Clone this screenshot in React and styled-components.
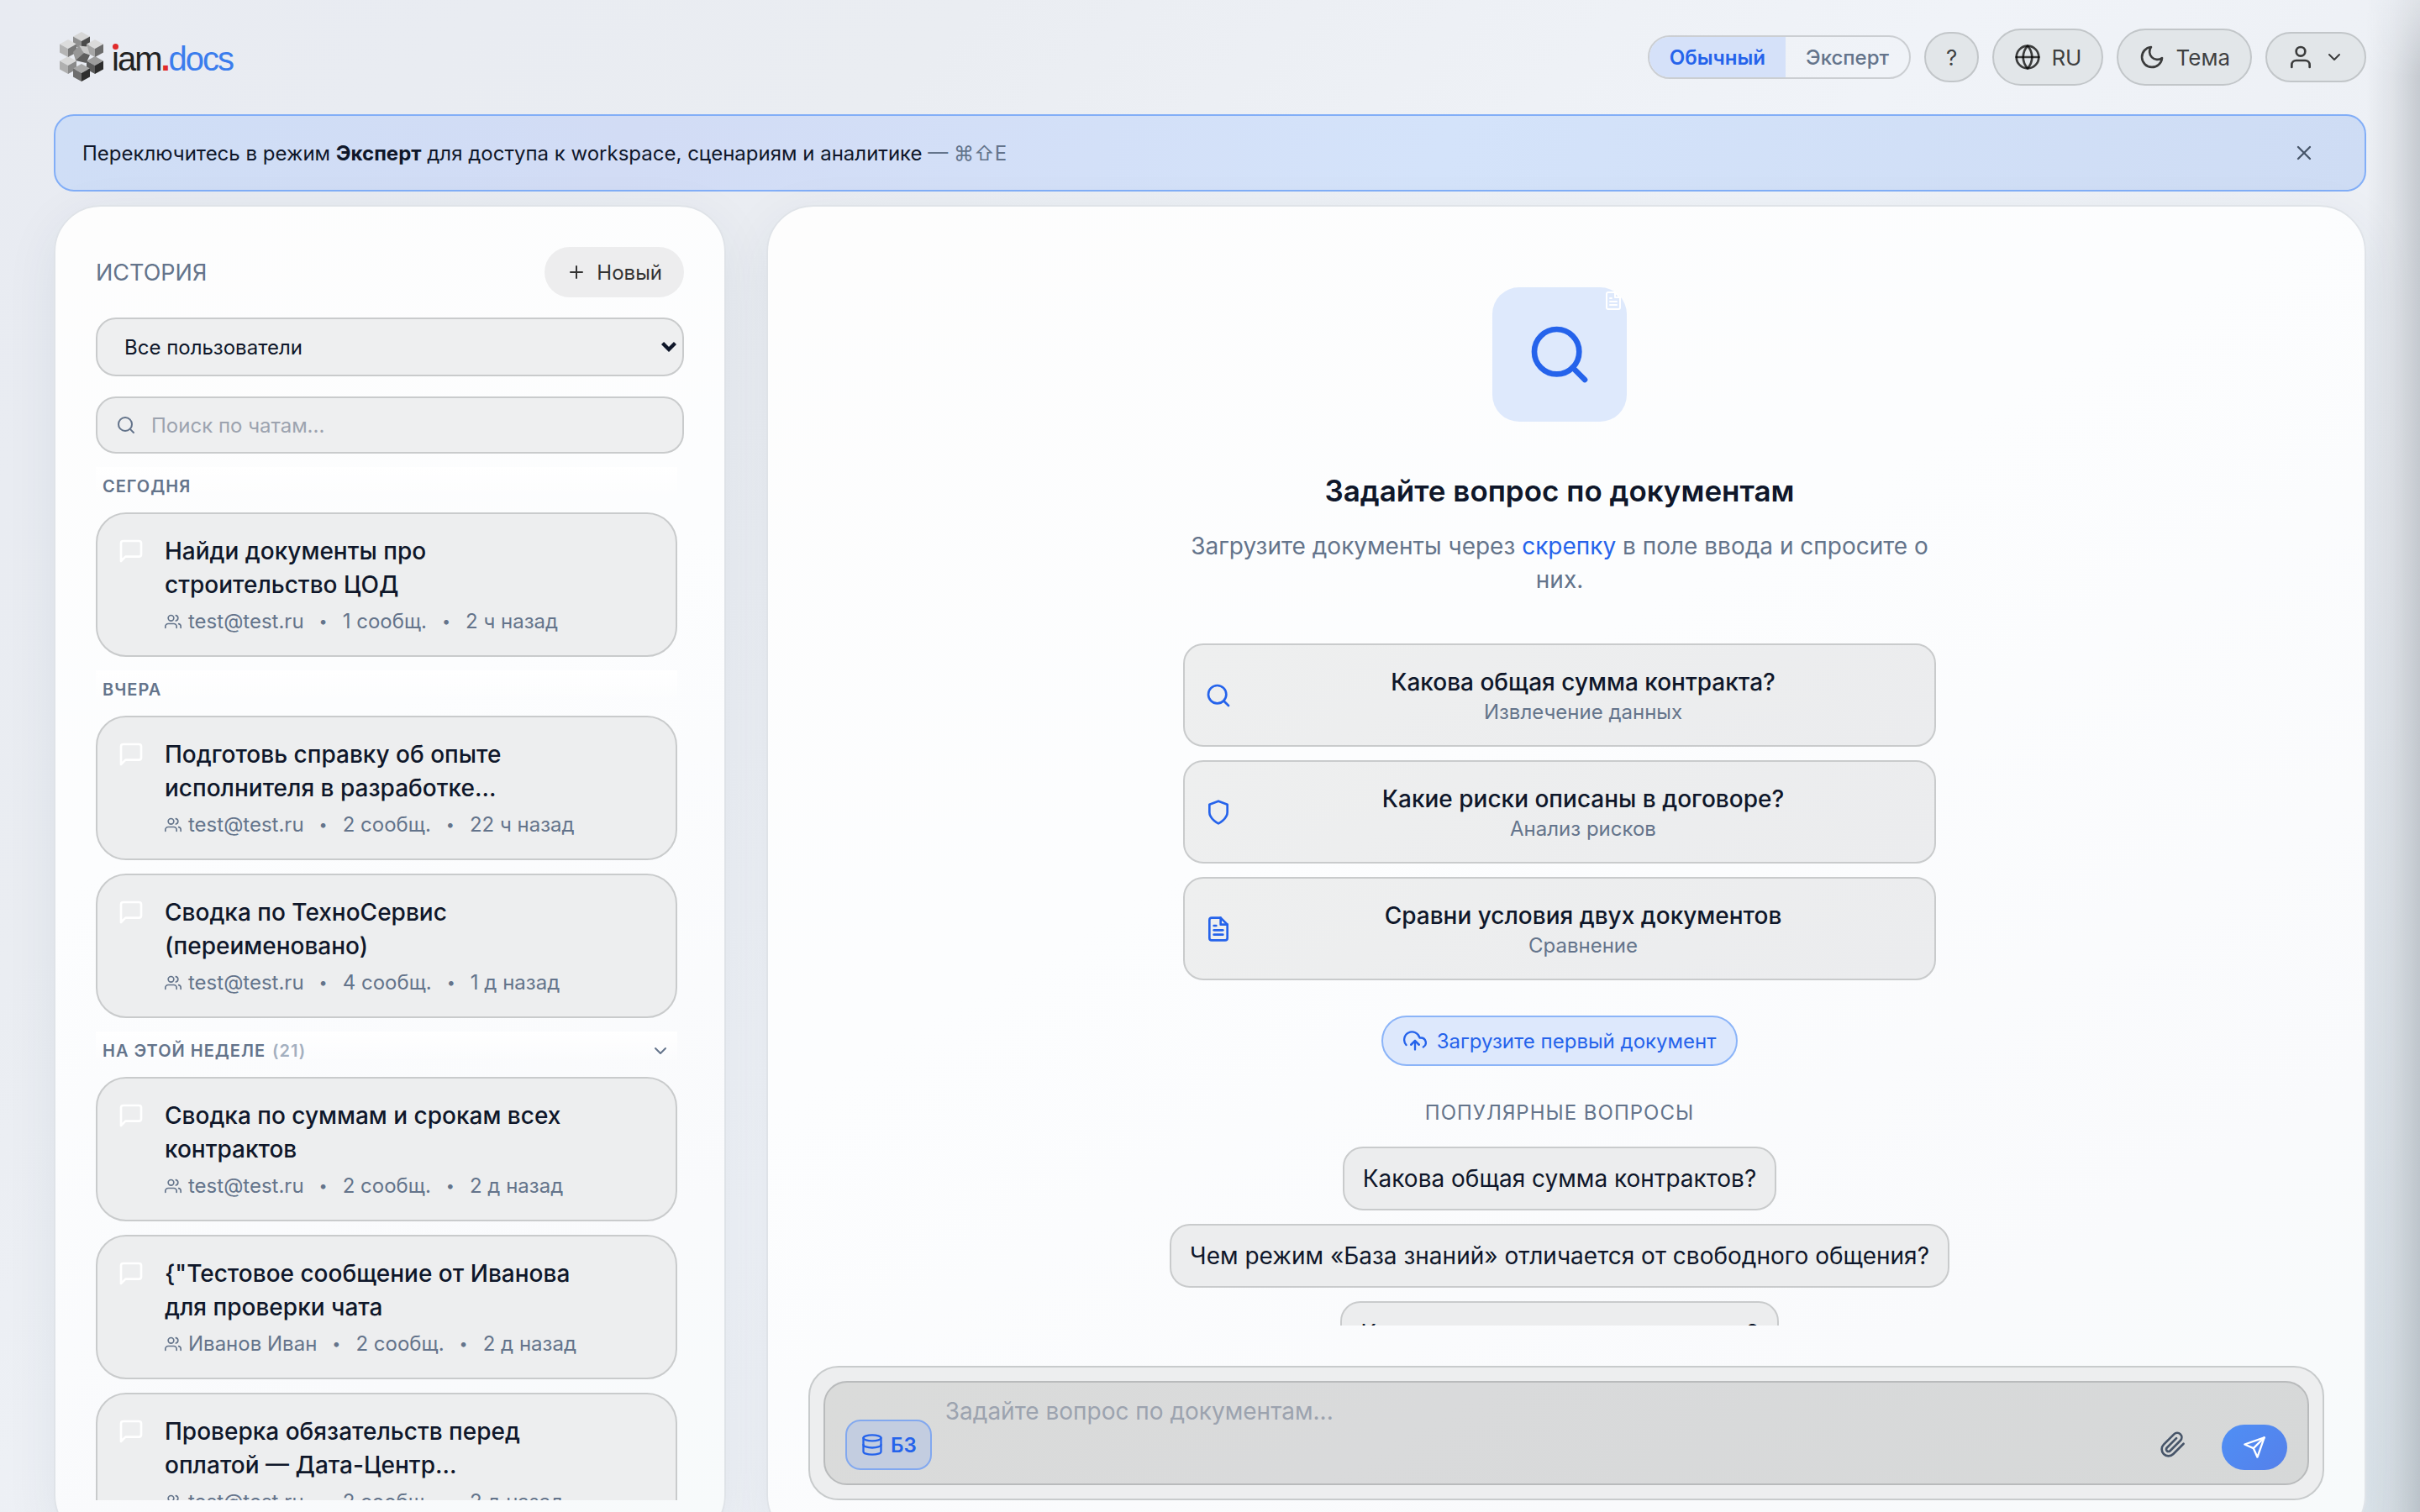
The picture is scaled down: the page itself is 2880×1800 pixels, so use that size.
import React from 'react';
import styled, { createGlobalStyle } from 'styled-components';
import {
    FiChevronDown,
    FiDatabase,
    FiFileText,
    FiGlobe,
    FiMessageSquare,
    FiMoon,
    FiPaperclip,
    FiPlus,
    FiSearch,
    FiSend,
    FiShield,
    FiUploadCloud,
    FiUser,
    FiUsers,
    FiX,
} from 'react-icons/fi';

const GlobalStyle = createGlobalStyle`
  * {
    box-sizing: border-box;
  }

  body {
    margin: 0;
    overflow: hidden;
    color: #0f172a;
    font-family: Inter, 'Noto Sans', sans-serif;
    font-size: 26px;
    -webkit-font-smoothing: antialiased;
  }

  button,
  input,
  select,
  textarea {
    font: inherit;
    color: inherit;
  }

  button {
    cursor: pointer;
  }

  svg {
    flex-shrink: 0;
  }
`;

const Page = styled.div`
  position: relative;
  height: 100vh;
  overflow: hidden;
  padding: 0 64px;
  background: linear-gradient(135deg, #e8ebf2 0%, #eaedf2 25%, #f0f3f8 50%, #ebeef3 75%, #dfe7ed 100%);
`;

const EdgeShade = styled.div`
  position: absolute;
  top: 0;
  right: 0;
  bottom: 0;
  width: 64px;
  background: linear-gradient(90deg, rgba(40, 50, 60, 0) 0%, rgba(40, 50, 60, 0.07) 50%, rgba(40, 50, 60, 0.2) 100%);
  mask-image: linear-gradient(180deg, rgba(0, 0, 0, 0.4) 0, #000 90px);
`;

const Header = styled.header`
  display: flex;
  align-items: center;
  justify-content: space-between;
  height: 136px;
`;

const LogoLink = styled.a`
  display: flex;
  align-items: center;
  gap: 10px;
  padding-left: 7px;
  text-decoration: none;
`;

const LogoText = styled.span`
  position: relative;
  padding-top: 4px;
  color: #222;
  font-family: 'Liberation Sans', Arial, sans-serif;
  font-size: 40px;
  line-height: 44px;
  letter-spacing: -2px;

  /* red dot over the letter i */
  &::before {
    content: '';
    position: absolute;
    top: 8px;
    left: 1px;
    width: 7px;
    height: 7px;
    border-radius: 50%;
    background: #e02b2b;
  }
`;

const LogoDot = styled.span`
  color: #e02b2b;
  font-weight: 700;
`;

const LogoAccent = styled.span`
  color: #3b7ded;
`;

const HeaderActions = styled.div`
  display: flex;
  align-items: center;
  gap: 16px;
`;

const ModeSwitch = styled.div`
  display: flex;
  height: 52px;
  overflow: hidden;
  border: 2px solid #cbced2;
  border-radius: 26px;
`;

const ModeButton = styled.button`
  padding: 0 24px;
  border: 0;
  background: ${({ $active }) => ($active ? '#d5e1f9' : 'transparent')};
  color: ${({ $active }) => ($active ? '#2563eb' : '#64748b')};
  font-size: 24px;
  font-weight: ${({ $active }) => ($active ? 600 : 500)};
`;

const PillButton = styled.button`
  display: flex;
  align-items: center;
  justify-content: center;
  gap: 12px;
  height: ${({ $tall }) => ($tall ? '68px' : '60px')};
  padding: 0 24px;
  border: 2px solid #c2c6c9;
  border-radius: 34px;
  background: #e2e6e9;
  color: rgba(0, 0, 0, 0.74);
  font-size: 26px;
`;

const Banner = styled.div`
  display: flex;
  align-items: center;
  justify-content: space-between;
  height: 92px;
  margin-bottom: 16px;
  padding: 0 58px 0 32px;
  border: 2px solid #82aef7;
  border-radius: 24px;
  background: linear-gradient(110deg, #cfdef6 0%, #d2dcf5 25%, #d4e3fa 60%, #cedcf4 100%);
  font-size: 24px;
`;

const BannerHint = styled.span`
  color: #64748b;
`;

const IconButton = styled.button`
  display: flex;
  padding: 0;
  border: 0;
  background: transparent;
  color: #475569;
`;

const Workspace = styled.div`
  display: grid;
  grid-template-columns: 800px 1fr;
  gap: 48px;
  height: calc(100vh - 208px);
`;

const Panel = styled.section`
  display: flex;
  flex-direction: column;
  min-width: 0;
  min-height: 0;
  padding: 48px;
  border: 2px solid #dfe3e8;
  border-radius: 56px;
  background: linear-gradient(150deg, #fdfdfd 0%, #fcfdfe 40%, #f9fafc 80%, #f7fafb 100%);
  box-shadow: 0 16px 64px rgba(30, 50, 90, 0.07);
`;

const SidebarHeader = styled.div`
  display: flex;
  align-items: center;
  justify-content: space-between;
  margin-bottom: 24px;
`;

const SidebarTitle = styled.h2`
  margin: 0;
  color: #64748b;
  font-size: 27px;
  font-weight: 400;
`;

const NewButton = styled.button`
  display: flex;
  align-items: center;
  gap: 12px;
  height: 60px;
  padding: 0 26px;
  border: 0;
  border-radius: 30px;
  background: #ededee;
  color: #333;
  font-size: 24px;
`;

const FieldBox = styled.label`
  position: relative;
  display: flex;
  align-items: center;
  flex-shrink: 0;
  border: 2px solid #c9cbcc;
  border-radius: 24px;
  background: #eeeff0;
`;

const UserSelect = styled.select`
  width: 100%;
  height: 66px;
  padding: 0 32px;
  border: 0;
  background: transparent;
  appearance: none;
  font-size: 24px;
`;

const SelectArrow = styled.svg`
  position: absolute;
  right: 7px;
  pointer-events: none;
`;

const SearchBox = styled(FieldBox)`
  gap: 18px;
  margin-top: 24px;
  padding: 0 22px;
  color: #64748b;
`;

const SearchInput = styled.input`
  flex: 1;
  min-width: 0;
  height: 64px;
  padding: 0;
  border: 0;
  background: transparent;
  font-size: 24px;

  &::placeholder {
    color: #9ca3af;
  }
`;

const ChatList = styled.div`
  display: flex;
  flex: 1;
  flex-direction: column;
  gap: 16px;
  min-height: 0;
  margin-top: 16px;
  padding-right: 8px;
  overflow: hidden;
`;

const GroupHeader = styled.button`
  display: flex;
  align-items: center;
  flex-shrink: 0;
  gap: 8px;
  height: 38px;
  padding: 8px 8px 0;
  border: 0;
  background: linear-gradient(180deg, #fff 0%, rgba(255, 255, 255, 0) 100%);
  color: #64748b;
  font-size: 20px;
  font-weight: 600;
  letter-spacing: 1px;
  line-height: 24px;
  text-align: left;
  text-transform: uppercase;

  svg {
    margin-left: auto;
  }
`;

const GroupCount = styled.span`
  color: #a3afbf;
`;

const ChatCard = styled.article`
  display: flex;
  align-items: flex-start;
  flex-shrink: 0;
  gap: 24px;
  padding: 24px 96px 24px 24px;
  border: 2px solid #c9cbcc;
  border-radius: 36px;
  background: #edeeef;

  > svg {
    margin-top: 4px;
    color: #fff;
  }
`;

const ChatTitle = styled.h3`
  margin: 0;
  font-size: 28px;
  font-weight: 500;
  line-height: 40px;
`;

const ChatMeta = styled.div`
  display: flex;
  align-items: center;
  gap: 18px;
  margin-top: 8px;
  color: #64748b;
  font-size: 24px;
  line-height: 32px;
  white-space: nowrap;
`;

const ChatAuthor = styled.span`
  display: flex;
  align-items: center;
  gap: 8px;
`;

const MetaDot = styled.span`
  font-size: 18px;
`;

const MainScroll = styled.div`
  display: flex;
  flex: 1;
  flex-direction: column;
  align-items: center;
  min-height: 0;
  padding: 48px 16px 0 0;
  overflow: hidden;
  text-align: center;

  > * {
    flex-shrink: 0;
  }
`;

const HeroIcon = styled.div`
  position: relative;
  display: flex;
  align-items: center;
  justify-content: center;
  width: 160px;
  height: 160px;
  border-radius: 32px;
  background: #dee9fc;
  color: #2563eb;
`;

const HeroBadge = styled.span`
  position: absolute;
  top: 4px;
  right: 4px;
  display: flex;
  color: #fff;
`;

const HeroTitle = styled.h1`
  margin: 54px 0 18px;
  font-size: 35px;
  font-weight: 600;
  line-height: 56px;
`;

const HeroText = styled.p`
  width: 880px;
  margin: 0 0 56px;
  color: #64748b;
  font-size: 28px;
  line-height: 40px;
`;

const TextLink = styled.a`
  color: #2563eb;
  text-decoration: none;
`;

const PromptList = styled.div`
  display: flex;
  flex-direction: column;
  gap: 16px;
  width: 896px;
`;

const PromptCard = styled.button`
  display: flex;
  align-items: center;
  gap: 24px;
  height: 123px;
  padding: 0 24px;
  border: 2px solid #c9cbcc;
  border-radius: 24px;
  background: linear-gradient(150deg, #eeefef 0%, #ebecee 100%);

  > svg {
    color: #2563eb;
  }
`;

const PromptBody = styled.span`
  display: flex;
  flex: 1;
  flex-direction: column;
`;

const PromptTitle = styled.span`
  font-size: 28px;
  font-weight: 500;
  line-height: 40px;
`;

const PromptKind = styled.span`
  color: #64748b;
  font-size: 24px;
  line-height: 32px;
`;

const UploadButton = styled.button`
  display: flex;
  align-items: center;
  gap: 12px;
  height: 60px;
  margin-top: 42px;
  padding: 0 24px;
  border: 2px solid #8bb4f8;
  border-radius: 30px;
  background: #dde8fc;
  color: #2563eb;
  font-size: 24px;
`;

const PopularTitle = styled.h2`
  margin: 40px 0 24px;
  color: #64748b;
  font-size: 24px;
  font-weight: 400;
  letter-spacing: 1px;
  line-height: 32px;
  text-transform: uppercase;
`;

const PopularList = styled.div`
  display: flex;
  flex-direction: column;
  align-items: center;
  gap: 16px;
`;

const PopularButton = styled.button`
  height: 76px;
  padding: 0 22px;
  border: 2px solid #c9cbcc;
  border-radius: 24px;
  background: #ecedee;
  font-size: 28px;
`;

const ComposerFrame = styled.form`
  margin-top: 48px;
  padding: 16px;
  border: 2px solid #c8cbcc;
  border-radius: 36px;
  background: #edeeef;
`;

const Composer = styled.div`
  display: flex;
  align-items: flex-end;
  gap: 16px;
  height: 124px;
  padding: 0 24px 16px;
  border: 2px solid #b9bbbc;
  border-radius: 28px;
  background: linear-gradient(150deg, #dadbda 0%, #d9dadb 40%, #d6d8d8 100%);
`;

const BaseButton = styled.button`
  display: flex;
  align-items: center;
  gap: 8px;
  height: 60px;
  padding: 0 16px;
  border: 2px solid #82a8ef;
  border-radius: 18px;
  background: #c3cde0;
  color: #2563eb;
  font-size: 24px;
  font-weight: 600;
`;

const QuestionInput = styled.textarea`
  flex: 1;
  align-self: stretch;
  padding: 14px 0 0;
  border: 0;
  background: transparent;
  font-size: 28px;
  line-height: 40px;
  resize: none;

  &::placeholder {
    color: #9ca3af;
  }
`;

const AttachButton = styled(IconButton)`
  margin: 0 26px 14px 0;
`;

const SendButton = styled.button`
  display: flex;
  align-items: center;
  justify-content: center;
  width: 78px;
  height: 54px;
  padding: 0;
  border: 0;
  border-radius: 27px;
  background: linear-gradient(135deg, #4f8ff5, #5580ea);
  color: #fff;
`;

const groups = [
    {
        title: 'Сегодня',
        chats: [
            { title: 'Найди документы про строительство ЦОД', author: 'test@test.ru', count: 1, time: '2 ч назад' },
        ],
    },
    {
        title: 'Вчера',
        chats: [
            { title: 'Подготовь справку об опыте исполнителя в разработке...', author: 'test@test.ru', count: 2, time: '22 ч назад' },
            { title: 'Сводка по ТехноСервис (переименовано)', author: 'test@test.ru', count: 4, time: '1 д назад' },
        ],
    },
    {
        title: 'На этой неделе',
        total: 21,
        chats: [
            { title: 'Сводка по суммам и срокам всех контрактов', author: 'test@test.ru', count: 2, time: '2 д назад' },
            { title: '{"Тестовое сообщение от Иванова для проверки чата', author: 'Иванов Иван', count: 2, time: '2 д назад' },
            { title: 'Проверка обязательств перед оплатой — Дата-Центр...', author: 'test@test.ru', count: 2, time: '2 д назад' },
        ],
    },
];

const prompts = [
    { icon: FiSearch, title: 'Какова общая сумма контракта?', kind: 'Извлечение данных' },
    { icon: FiShield, title: 'Какие риски описаны в договоре?', kind: 'Анализ рисков' },
    { icon: FiFileText, title: 'Сравни условия двух документов', kind: 'Сравнение' },
];

const popular = [
    'Какова общая сумма контрактов?',
    'Чем режим «База знаний» отличается от свободного общения?',
    'Какие риски описаны в договоре?',
];

// x, y of the cube's top corner and the shades of its top, left and right faces
const cubes = [
    [26, 0, '#d6d6d6', '#8f8f8f', '#4a4a4a'],
    [10, 29, '#d8d8d8', '#b0b0b0', '#8a8a8a'],
    [42, 29, '#9c9c9c', '#5c5c5c', '#2c2c2c'],
    [10, 9, '#dcdcdc', '#b4b4b4', '#787878'],
    [42, 9, '#dadada', '#a6a6a6', '#6c6c6c'],
    [26, 38, '#a8a8a8', '#6e6e6e', '#2e2e2e'],
];

const LogoMark = () => (
    <svg width="52" height="60" viewBox="0 0 52 60" aria-hidden="true">
        {cubes.map(([x, y, top, left, right]) => (
            <g key={`${x}-${y}`}>
                <path d={`M${x} ${y}l10 5.5l-10 5.5l-10-5.5z`} fill={top} />
                <path d={`M${x - 10} ${y + 5.5}l10 5.5v10l-10-5.5z`} fill={left} />
                <path d={`M${x + 10} ${y + 5.5}l-10 5.5v10l10-5.5z`} fill={right} />
            </g>
        ))}
        <path d="M23 16.5L33 17.5L36 27.5L29 25z" fill="#c9c9c9" />
        <path d="M23 16.5L29 25L26 31L19 34L16 24z" fill="#979797" />
        <path d="M29 25L36 27.5L31.5 37L19 34z" fill="#5f5f5f" />
    </svg>
);

const ChatItem = ({ chat }) => (
    <ChatCard>
        <FiMessageSquare size={32} />
        <div>
            <ChatTitle>{chat.title}</ChatTitle>
            <ChatMeta>
                <ChatAuthor>
                    <FiUsers size={20} />
                    {chat.author}
                </ChatAuthor>
                <MetaDot>•</MetaDot>
                <span>{chat.count} сообщ.</span>
                <MetaDot>•</MetaDot>
                <span>{chat.time}</span>
            </ChatMeta>
        </div>
    </ChatCard>
);

const Sidebar = () => (
    <Panel as="aside">
        <SidebarHeader>
            <SidebarTitle>ИСТОРИЯ</SidebarTitle>
            <NewButton type="button">
                <FiPlus size={24} />
                Новый
            </NewButton>
        </SidebarHeader>
        <FieldBox>
            <UserSelect aria-label="Пользователи" defaultValue="all">
                <option value="all">Все пользователи</option>
            </UserSelect>
            <SelectArrow width="18" height="14" viewBox="0 0 18 14" fill="none" stroke="#0f172a" strokeWidth="4.4">
                <path d="M1.5 2.5L9 10L16.5 2.5" />
            </SelectArrow>
        </FieldBox>
        <SearchBox>
            <FiSearch size={24} />
            <SearchInput type="text" aria-label="Поиск по чатам" placeholder="Поиск по чатам..." />
        </SearchBox>
        <ChatList>
            {groups.map((group) => (
                <React.Fragment key={group.title}>
                    <GroupHeader type="button">
                        {group.title}
                        {group.total && <GroupCount>({group.total})</GroupCount>}
                        {group.total && <FiChevronDown size={24} />}
                    </GroupHeader>
                    {group.chats.map((chat) => (
                        <ChatItem key={chat.title} chat={chat} />
                    ))}
                </React.Fragment>
            ))}
        </ChatList>
    </Panel>
);

const App = () => (
    <Page>
        <GlobalStyle />
        <EdgeShade />
        <Header>
            <LogoLink href="#" aria-label="iam.docs">
                <LogoMark />
                <LogoText>
                    iam<LogoDot>.</LogoDot>
                    <LogoAccent>docs</LogoAccent>
                </LogoText>
            </LogoLink>
            <HeaderActions>
                <ModeSwitch>
                    <ModeButton type="button" $active>Обычный</ModeButton>
                    <ModeButton type="button">Эксперт</ModeButton>
                </ModeSwitch>
                <PillButton type="button">?</PillButton>
                <PillButton type="button" $tall>
                    <FiGlobe size={32} />
                    RU
                </PillButton>
                <PillButton type="button" $tall>
                    <FiMoon size={32} />
                    Тема
                </PillButton>
                <PillButton type="button" aria-label="Профиль">
                    <FiUser size={32} />
                    <FiChevronDown size={24} />
                </PillButton>
            </HeaderActions>
        </Header>
        <Banner>
            <span>
                Переключитесь в режим <strong>Эксперт</strong> для доступа к workspace, сценариям и аналитике{' '}
                <BannerHint>— ⌘⇧E</BannerHint>
            </span>
            <IconButton type="button" aria-label="Закрыть">
                <FiX size={28} />
            </IconButton>
        </Banner>
        <Workspace>
            <Sidebar />
            <Panel as="main">
                <MainScroll>
                    <HeroIcon>
                        <FiSearch size={80} />
                        <HeroBadge>
                            <FiFileText size={24} />
                        </HeroBadge>
                    </HeroIcon>
                    <HeroTitle>Задайте вопрос по документам</HeroTitle>
                    <HeroText>
                        Загрузите документы через <TextLink href="#">скрепку</TextLink> в поле ввода и спросите о них.
                    </HeroText>
                    <PromptList>
                        {prompts.map(({ icon: Icon, title, kind }) => (
                            <PromptCard type="button" key={title}>
                                <Icon size={32} />
                                <PromptBody>
                                    <PromptTitle>{title}</PromptTitle>
                                    <PromptKind>{kind}</PromptKind>
                                </PromptBody>
                            </PromptCard>
                        ))}
                    </PromptList>
                    <UploadButton type="button">
                        <FiUploadCloud size={28} />
                        Загрузите первый документ
                    </UploadButton>
                    <PopularTitle>Популярные вопросы</PopularTitle>
                    <PopularList>
                        {popular.map((question) => (
                            <PopularButton type="button" key={question}>{question}</PopularButton>
                        ))}
                    </PopularList>
                </MainScroll>
                <ComposerFrame>
                    <Composer>
                        <BaseButton type="button">
                            <FiDatabase size={28} />
                            БЗ
                        </BaseButton>
                        <QuestionInput aria-label="Вопрос" placeholder="Задайте вопрос по документам..." />
                        <AttachButton type="button" aria-label="Прикрепить файл">
                            <FiPaperclip size={32} />
                        </AttachButton>
                        <SendButton type="submit" aria-label="Отправить">
                            <FiSend size={28} />
                        </SendButton>
                    </Composer>
                </ComposerFrame>
            </Panel>
        </Workspace>
    </Page>
);

export default App;
